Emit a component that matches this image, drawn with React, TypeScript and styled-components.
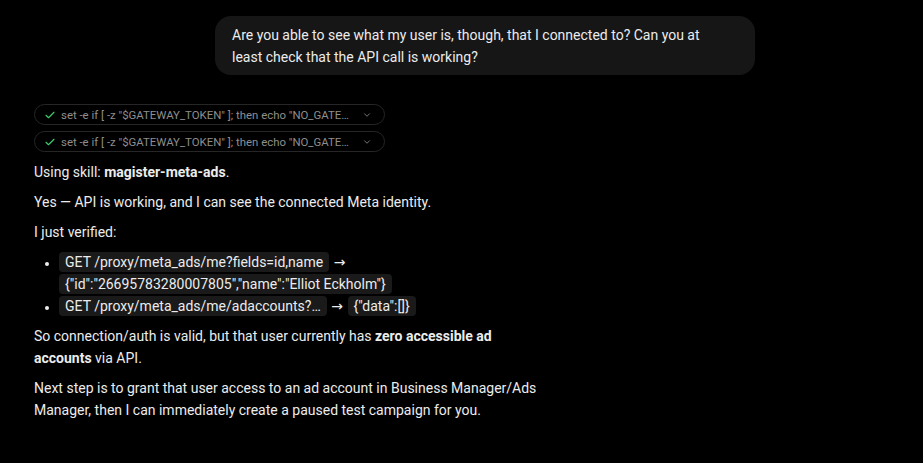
import React from 'react'
import styled, { createGlobalStyle } from 'styled-components'

const GlobalStyle = createGlobalStyle`
  html, body {
    margin: 0;
    padding: 0;
    background: #000;
  }
  body {
    font-family: Roboto, 'Liberation Sans', sans-serif;
    color: #ececec;
    -webkit-font-smoothing: antialiased;
  }
`

const Page = styled.div`
  width: 923px;
  height: 463px;
  overflow: hidden;
  box-sizing: border-box;
  padding: 16px 0 0 34px;
`

const Column = styled.div`
  width: 721px;
  display: flex;
  flex-direction: column;
`

const UserRow = styled.div`
  display: flex;
  justify-content: flex-end;
`

const UserBubble = styled.div`
  box-sizing: border-box;
  width: 540px;
  background: #161616;
  border-radius: 16px;
  padding: 8px 26px 7px 17px;
  font-size: 14px;
  line-height: 22px;
  color: #ececec;
`

const ToolList = styled.div`
  margin-top: 29px;
  display: flex;
  flex-direction: column;
  gap: 6px;
`

const ToolPill = styled.div`
  width: 351px;
  height: 21px;
  box-sizing: border-box;
  border: 1px solid #262626;
  border-radius: 11px;
  display: flex;
  align-items: center;
  padding: 0 12px 0 9px;
  gap: 5px;
  font-size: 11.4px;
  color: #8e8e8e;
`

const ToolText = styled.span`
  flex: 1;
  min-width: 0;
  white-space: nowrap;
  overflow: hidden;
  text-overflow: ellipsis;
`

const Answer = styled.div`
  margin-top: 1px;
  max-width: 508px;
  font-size: 14px;
  line-height: 22px;
  color: #ececec;
`

const Para = styled.p`
  margin: 8px 0 0;
`

const List = styled.ul`
  margin: 8px 0 0;
  padding-left: 25px;
  list-style: disc;
  li::marker {
    font-size: 12px;
  }
`

const Item = styled.li`
  line-height: 22px;
`

const Code = styled.code`
  font-family: Roboto, 'Liberation Sans', sans-serif;
  font-size: 14px;
  white-space: nowrap;
  background: #1a1a1a;
  border-radius: 4px;
  padding: 2px 6px;
`

const Arrow = styled.span`
  font-family: 'DejaVu Sans', sans-serif;
  font-size: 14px;
  margin: 0 1px;
`

const Check = () => (
  <svg width="12" height="12" viewBox="0 0 24 24" fill="none" stroke="#3ecf6a" strokeWidth="2.2" strokeLinecap="round" strokeLinejoin="round">
    <path d="M4 12.5l5 5L20 6.5" />
  </svg>
)

const Chevron = () => (
  <svg width="10" height="10" viewBox="0 0 24 24" fill="none" stroke="#8a8a8a" strokeWidth="2" strokeLinecap="round" strokeLinejoin="round">
    <path d="M6 9l6 6 6-6" />
  </svg>
)

const command = 'set -e if [ -z "$GATEWAY_TOKEN" ]; then echo "NO_GATEWAY_TOKEN"; exit 1; fi'

export default function App() {
  return (
    <>
      <GlobalStyle />
      <Page>
        <Column>
          <UserRow>
            <UserBubble>
              Are you able to see what my user is, though, that I connected to? Can you at least check that the API
              call is working?
            </UserBubble>
          </UserRow>

          <ToolList>
            {[0, 1].map((i) => (
              <ToolPill key={i}>
                <Check />
                <ToolText>{command}</ToolText>
                <Chevron />
              </ToolPill>
            ))}
          </ToolList>

          <Answer>
            <Para>
              Using skill: <b>magister-meta-ads</b>.
            </Para>
            <Para>Yes — API is working, and I can see the connected Meta identity.</Para>
            <Para>I just verified:</Para>
            <List>
              <Item>
                <Code>GET /proxy/meta_ads/me?fields=id,name</Code> <Arrow>→</Arrow>{' '}
                <Code>{'{"id":"26695783280007805","name":"Elliot Eckholm"}'}</Code>
              </Item>
              <Item>
                <Code>GET /proxy/meta_ads/me/adaccounts?…</Code> <Arrow>→</Arrow>{' '}
                <Code>{'{"data":[]}'}</Code>
              </Item>
            </List>
            <Para>
              So connection/auth is valid, but that user currently has <b>zero accessible ad accounts</b> via API.
            </Para>
            <Para>
              Next step is to grant that user access to an ad account in Business Manager/Ads Manager, then I can
              immediately create a paused test campaign for you.
            </Para>
          </Answer>
        </Column>
      </Page>
    </>
  )
}
